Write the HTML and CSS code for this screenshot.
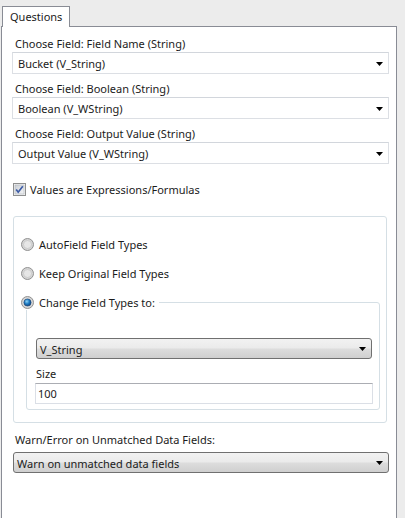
FILE: index.html
```html
<!DOCTYPE html>
<html>
<head>
<meta charset="utf-8">
<link rel="stylesheet" href="styles.css">
</head>
<body>
<div class="window">
  <div class="tabs">
    <div class="tab">Questions</div>
  </div>
  <div class="panel">
    <div class="field">
      <div class="label">Choose Field: Field Name (String)</div>
      <div class="combo"><span>Bucket (V_String)</span><svg class="arrow" width="7" height="4" viewBox="0 0 7 4"><polygon points="0,0 7,0 3.5,4" fill="#000"/></svg></div>
    </div>
    <div class="field">
      <div class="label">Choose Field: Boolean (String)</div>
      <div class="combo"><span>Boolean (V_WString)</span><svg class="arrow" width="7" height="4" viewBox="0 0 7 4"><polygon points="0,0 7,0 3.5,4" fill="#000"/></svg></div>
    </div>
    <div class="field">
      <div class="label">Choose Field: Output Value (String)</div>
      <div class="combo"><span>Output Value (V_WString)</span><svg class="arrow" width="7" height="4" viewBox="0 0 7 4"><polygon points="0,0 7,0 3.5,4" fill="#000"/></svg></div>
    </div>

    <div class="check-row">
      <svg class="checkbox" width="13" height="13" viewBox="0 0 13 13">
        <defs>
          <linearGradient id="cbg" x1="0" y1="0" x2="1" y2="1">
            <stop offset="0" stop-color="#cbcfd5"/>
            <stop offset="1" stop-color="#f4f5f7"/>
          </linearGradient>
        </defs>
        <rect x="0.5" y="0.5" width="12" height="12" fill="#f4f4f4" stroke="#8e8f8f"/>
        <rect x="2" y="2" width="9" height="9" fill="url(#cbg)" stroke="#b0b4bb" stroke-width="0.6"/>
        <path d="M3.2 6.6 L5.2 9.2 L9.8 3.2" fill="none" stroke="#3c5ba5" stroke-width="1.7"/>
      </svg>
      <span>Values are Expressions/Formulas</span>
    </div>

    <div class="group">
      <div class="radio-row">
        <svg class="radio" width="13" height="13" viewBox="0 0 13 13">
          <defs>
            <radialGradient id="rg1" cx="0.5" cy="0.5" r="0.6">
              <stop offset="0" stop-color="#f2f2f2"/>
              <stop offset="1" stop-color="#c8c8c8"/>
            </radialGradient>
          </defs>
          <circle cx="6.5" cy="6.5" r="6" fill="url(#rg1)" stroke="#929292"/>
          <circle cx="6.5" cy="6.5" r="4" fill="#e6e6e6" stroke="#bdbdbd" stroke-width="0.6"/>
        </svg>
        <span>AutoField Field Types</span>
      </div>
      <div class="radio-row second">
        <svg class="radio" width="13" height="13" viewBox="0 0 13 13">
          <circle cx="6.5" cy="6.5" r="6" fill="url(#rg1)" stroke="#929292"/>
          <circle cx="6.5" cy="6.5" r="4" fill="#e6e6e6" stroke="#bdbdbd" stroke-width="0.6"/>
        </svg>
        <span>Keep Original Field Types</span>
      </div>
      <div class="subgroup">
        <div class="legend">
          <svg class="radio" width="13" height="13" viewBox="0 0 13 13">
            <defs>
              <radialGradient id="rg2" cx="0.4" cy="0.35" r="0.7">
                <stop offset="0" stop-color="#8fd3f5"/>
                <stop offset="0.5" stop-color="#1e7cc4"/>
                <stop offset="1" stop-color="#0d3f7a"/>
              </radialGradient>
            </defs>
            <circle cx="6.5" cy="6.5" r="6" fill="url(#rg1)" stroke="#929292"/>
            <circle cx="6.5" cy="6.5" r="3.6" fill="url(#rg2)" stroke="#1b3f6e" stroke-width="0.6"/>
          </svg>
          <span>Change Field Types to:</span>
        </div>
        <div class="combo gradient inner"><span>V_String</span><svg class="arrow" width="7" height="4" viewBox="0 0 7 4"><polygon points="0,0 7,0 3.5,4" fill="#000"/></svg></div>
        <div class="label size-label">Size</div>
        <div class="textbox">100</div>
      </div>
    </div>

    <div class="label warn-label">Warn/Error on Unmatched Data Fields:</div>
    <div class="combo gradient warn"><span>Warn on unmatched data fields</span><svg class="arrow" width="7" height="4" viewBox="0 0 7 4"><polygon points="0,0 7,0 3.5,4" fill="#000"/></svg></div>
  </div>
</div>
</body>
</html>
```
FILE: styles.css
```css
html, body {
  margin: 0;
  padding: 0;
}
body {
  width: 405px;
  height: 518px;
  overflow: hidden;
  background: #ececec;
  font-family: "Noto Sans", "Open Sans", "DejaVu Sans", sans-serif;
  font-size: 11px;
  color: #1b1b1b;
}
.window {
  display: flex;
  flex-direction: column;
  height: 518px;
}
.tabs {
  display: flex;
  padding: 6px 0 0 2px;
  height: 20px;
}
.tab {
  background: #fff;
  border: 1px solid #898c95;
  border-bottom: none;
  height: 20px;
  padding: 0 7px;
  line-height: 20px;
  position: relative;
  z-index: 1;
  margin-bottom: -1px;
}
.panel {
  flex: 1;
  margin-left: 1px;
  width: 377px;
  background: #fff;
  border: 1px solid #898c95;
  border-bottom: none;
  padding: 8px 7px 0 10px;
  display: flex;
  flex-direction: column;
}
.field {
  display: flex;
  flex-direction: column;
  margin-bottom: 6px;
}
.label {
  height: 17px;
  line-height: 17px;
  padding-left: 3px;
  white-space: nowrap;
}
.combo {
  height: 20px;
  border: 1px solid #dcdfe4;
  border-top-color: #d2d6dc;
  display: flex;
  align-items: center;
  justify-content: space-between;
  padding: 0 5px 0 5px;
  white-space: nowrap;
}
.combo span {
  padding-top: 1px;
}
.combo .arrow {
  flex: none;
  margin-top: 1px;
}
.combo.gradient {
  border: 1px solid #707070;
  border-radius: 3px;
  background: linear-gradient(#f2f2f2 0%, #ebebeb 45%, #dcdcdc 55%, #cfcfcf 100%);
  height: 19px;
  padding: 0 5px 0 3px;
}
.check-row {
  display: flex;
  align-items: center;
  height: 16px;
  margin-top: 11px;
  padding-left: 1px;
}
.check-row .checkbox {
  margin-right: 4px;
}
.group {
  margin: 19px 2px 0 1px;
  border: 1px solid #d5dfe5;
  border-radius: 3px;
  padding: 19px 6px 12px 7px;
  display: flex;
  flex-direction: column;
}
.radio-row {
  display: flex;
  align-items: center;
  height: 16px;
}
.radio-row .radio, .legend .radio {
  margin-right: 5px;
  flex: none;
}
.radio-row.second {
  margin-top: 13px;
}
.subgroup {
  margin: 21px 0 0 5px;
  border: 1px solid #d5dfe5;
  border-radius: 3px;
  padding: 0 7px 5px 9px;
  display: flex;
  flex-direction: column;
}
.legend {
  display: flex;
  align-items: center;
  align-self: flex-start;
  height: 16px;
  margin: -9px 0 0 -15px;
  background: #fff;
  padding-right: 4px;
}
.combo.inner {
  margin-top: 28px;
  padding-left: 3px;
}
.size-label {
  margin-top: 7px;
  height: 16px;
  line-height: 16px;
  padding-left: 0;
}
.textbox {
  margin-top: 1px;
  height: 19px;
  line-height: 20px;
  border: 1px solid #dbdfe6;
  border-top-color: #abadb3;
  padding-left: 2px;
  margin-left: -1px;
  margin-right: -1px;
}
.warn-label {
  margin-top: 9px;
  height: 16px;
  line-height: 16px;
  padding-left: 3px;
}
.combo.warn {
  margin-top: 4px;
  margin-left: 1px;
}
```
